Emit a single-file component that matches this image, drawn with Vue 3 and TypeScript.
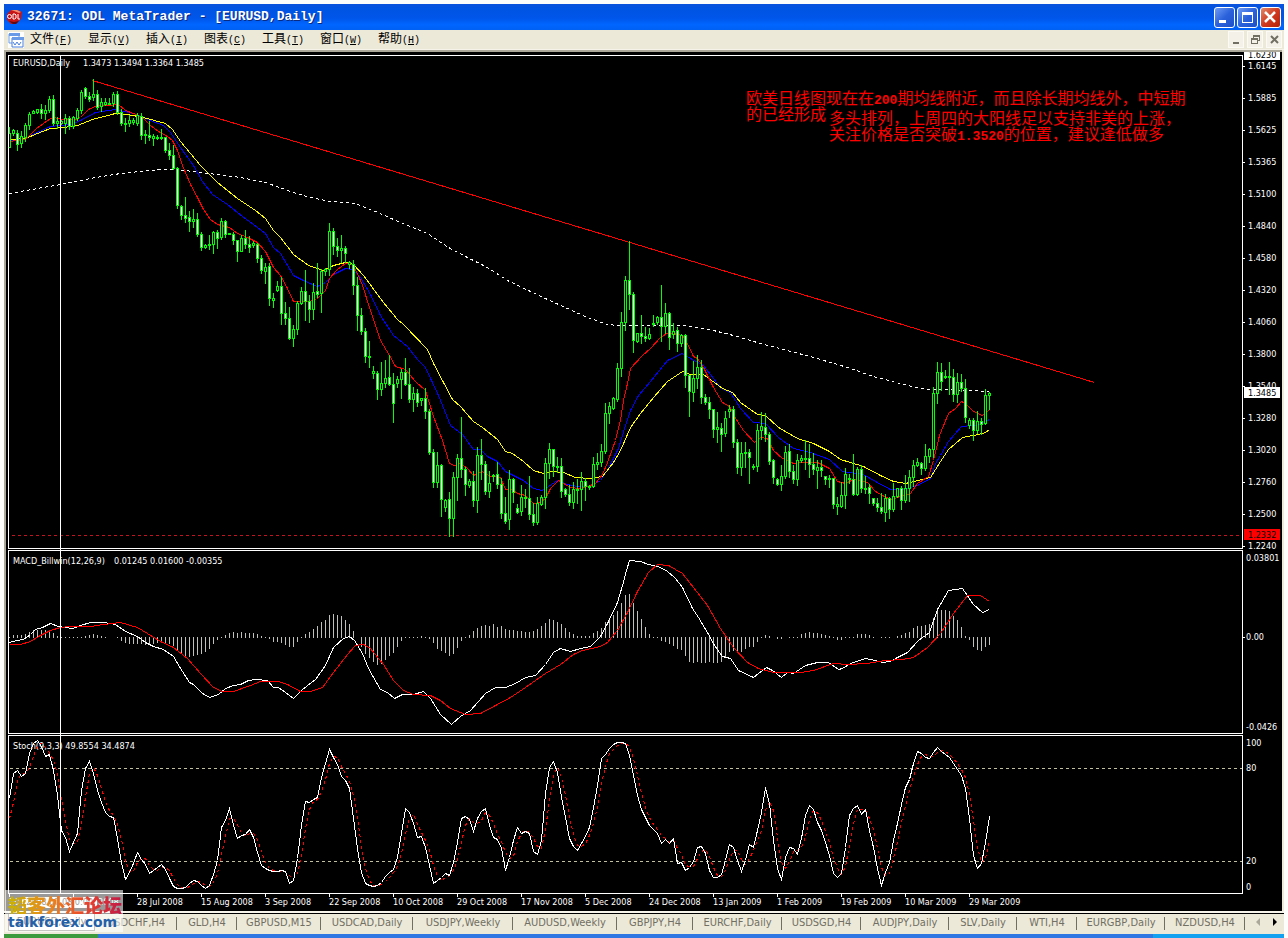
<script setup lang="ts">
interface Level { label: string; y: number }

const menus = [
  { name: '文件', key: 'F' }, { name: '显示', key: 'V' }, { name: '插入', key: 'I' }, { name: '图表', key: 'C' },
  { name: '工具', key: 'T' }, { name: '窗口', key: 'W' }, { name: '帮助', key: 'H' },
]
const tabs = [
  'EURUSD,Daily', 'USDCHF,H4', 'GLD,H4', 'GBPUSD,M15', 'USDCAD,Daily', 'USDJPY,Weekly', 'AUDUSD,Weekly', 'GBPJPY,H4',
  'EURCHF,Daily', 'USDSGD,H4', 'AUDJPY,Daily', 'SLV,Daily', 'WTI,H4', 'EURGBP,Daily', 'NZDUSD,H4',
]
const dates = [
  '20', '2008', '28 Jul 2008', '15 Aug 2008', '3 Sep 2008', '22 Sep 2008', '10 Oct 2008', '29 Oct 2008',
  '17 Nov 2008', '5 Dec 2008', '24 Dec 2008', '13 Jan 2009', '1 Feb 2009', '19 Feb 2009', '10 Mar 2009', '29 Mar 2009',
]
const priceLabels: Level[] = [
  '1.6145', '1.5885', '1.5625', '1.5365', '1.5100', '1.4840', '1.4580', '1.4320',
  '1.4060', '1.3800', '1.3540', '1.3280', '1.3020', '1.2760', '1.2500', '1.2240',
].map((label, i) => ({ label, y: 66 + i * 32 }))
const macdLabels: Level[] = [{ label: '0.03801', y: 558 }, { label: '0.00', y: 637 }, { label: '-0.0426', y: 727 }]
const stochLabels: Level[] = [{ label: '100', y: 743 }, { label: '80', y: 768 }, { label: '20', y: 861 }, { label: '0', y: 887 }]

const FIRST = 9
const STEP = 4

// One bar per entry: high, body top, body bottom, low, and d for a falling bar
const bars = `127 133 147 147,129 130 133 135,130 133 144 150 d,131 136 143 147,123 125 137 141,112 114 125 129,110 111 113 113,109 109 112 113,104 109 113 118 d,105 110 113 119,
96 99 110 112,95 99 123 125 d,117 121 123 128,120 121 123 124,114 118 123 133,116 118 126 129 d,116 117 126 128,108 110 118 120,90 92 110 113,87 88 96 98 d,
92 96 99 101 d,79 94 97 100,90 94 107 109 d,98 102 106 111,98 102 104 105,98 103 104 104,92 94 103 106,91 94 112 114 d,109 112 123 125 d,118 123 124 131,
115 120 123 126,118 120 122 124,113 115 123 125,113 116 135 139 d,130 134 135 143,121 135 137 140 d,134 136 138 145,135 137 138 139,129 137 138 139,137 137 150 152 d,
143 150 155 159 d,145 155 168 169 d,167 168 205 208 d,205 206 215 219 d,197 215 218 222 d,211 217 221 231 d,209 219 221 227,213 219 234 236 d,232 234 247 250 d,244 245 247 248,
235 244 245 249,231 232 244 253,230 232 238 248 d,218 221 237 239,220 221 234 237 d,233 233 234 234,232 234 240 244 d,240 240 251 261 d,235 238 251 251,230 238 244 248 d,
236 244 247 252 d,241 243 245 247,243 244 258 262 d,255 258 270 273 d,263 267 271 283,263 266 298 305 d,293 298 300 307,281 286 290 291,277 286 313 324 d,302 313 318 324 d,
307 318 338 339 d,325 329 338 346,301 303 329 334,287 291 303 304,270 291 301 320 d,295 301 309 322 d,283 292 309 319,263 291 294 297 d,269 271 293 312,268 269 271 275,
223 231 269 275,228 231 246 254 d,238 246 250 256 d,235 248 250 262,246 248 253 262 d,261 262 264 268,260 264 285 294 d,277 285 315 330 d,308 315 331 334 d,328 331 356 362 d,
341 356 357 367,366 371 373 378,371 373 389 399 d,362 383 389 395,360 378 383 387,355 377 384 385 d,373 384 403 422 d,376 379 383 387,369 372 379 398,358 372 384 385 d,
368 384 399 402 d,387 393 399 411,389 393 402 406 d,398 398 400 405,388 398 411 418 d,409 411 452 454 d,449 452 482 487 d,452 465 482 487,464 465 499 516 d,499 500 507 511,
492 499 518 536 d,472 477 518 536,454 458 477 500,417 458 469 477 d,467 469 484 495 d,479 481 485 487,471 481 500 506 d,447 455 500 512,439 455 464 479 d,461 464 491 494 d,
471 483 491 497,474 475 476 481,462 474 484 488 d,478 484 513 518 d,497 513 521 523 d,470 479 519 529,478 479 492 502 d,504 508 512 513 d,485 497 511 515,489 497 498 507,
476 498 514 519 d,503 514 522 525 d,497 503 522 524,495 497 504 505,458 463 497 508,443 449 463 478,449 449 466 476 d,457 466 467 472,458 466 491 497 d,488 489 494 496 d,
485 494 502 505 d,482 489 502 508,479 489 490 503,472 481 489 510,478 481 486 500 d,485 486 487 489,457 464 486 487,453 462 464 469,444 451 462 466,403 413 451 453,
402 406 413 423,397 398 408 409,363 368 399 401,312 322 368 376,276 280 322 330,241 280 294 309 d,292 294 340 352 d,333 333 341 342,315 333 336 343 d,327 336 338 341 d,
328 334 338 339,315 323 324 326,316 317 322 324,285 317 326 341 d,303 313 326 333,312 313 337 349 d,323 331 334 338,327 330 343 351 d,334 335 343 346,334 335 375 387 d,
375 375 391 416 d,361 378 392 401,355 367 378 388,360 367 397 403 d,394 397 402 404 d,397 402 409 418 d,409 409 429 437 d,412 427 429 442,423 428 434 451 d,411 418 433 436,
405 409 411 417,406 409 442 447 d,439 442 467 473 d,442 453 467 475,442 452 453 467,449 452 457 483 d,464 466 467 469,424 430 466 471,412 426 430 439,413 427 434 441 d,
432 434 461 464 d,459 460 477 483 d,478 479 484 485 d,465 476 484 490,446 452 476 478,444 451 471 477 d,465 471 479 483 d,454 460 479 485,455 458 460 462,440 458 459 469,
444 458 464 477 d,453 464 469 474 d,460 467 470 488,460 467 470 476 d,476 476 479 484 d,475 478 479 487,478 478 504 508 d,497 504 506 514,482 495 506 507,468 474 495 508,
474 478 479 483,454 479 494 495 d,467 469 494 495,465 469 488 492 d,476 488 489 493,484 487 493 503 d,498 498 503 505 d,498 503 507 511 d,493 507 511 513 d,494 498 512 521,
497 498 509 518 d,483 496 509 511,488 488 496 497,486 488 500 509 d,475 488 500 502,470 477 488 501,460 465 477 486,458 462 465 466,462 463 468 474 d,444 456 468 470,
448 449 456 462,387 393 449 457,362 372 393 403,363 372 381 390 d,370 376 377 378,362 376 377 394,369 377 394 401 d,373 382 394 402,374 382 388 391 d,379 388 417 422 d,
418 420 425 428,418 420 430 440 d,411 421 430 433,418 421 424 434 d,389 395 423 424,392 393 395 409`

const candles = bars.split(',').map((row, i) => {
  const [high, top, bottom, low, down] = row.trim().split(' ')
  return { x: FIRST + i * STEP, high: +high, top: +top, bottom: +bottom, low: +low, down: down === 'd' }
})
const box = (x: number, y: number, w: number, h: number) => `M${x} ${y}h${w}v${h}h${-w}z`
const green = candles
  .map(c => box(c.x, c.high, 1, c.low - c.high + 1) + box(c.x - 1, c.top, 3, c.bottom - c.top + 1))
  .join('')
const core = (down: boolean) => candles
  .filter(c => c.down === down && c.bottom - c.top > 1)
  .map(c => box(c.x, c.top + 1, 1, c.bottom - c.top - 1))
  .join('')

const fastMa = '9,141 25,139 36,128 43,123 50,118 53,117 63,119 75,119 80,117 88,109 97,105 107,105 118,104 125,110 133,113 142,117 150,125 158,131 167,136 172,140 177,150 182,165 190,184 197,197 203,209 210,219 217,224 229,227 237,233 247,237 257,242 265,251 273,267 280,275 287,288 293,301 300,301 309,301 316,299 325,290 329,278 337,269 345,263 352,264 357,273 362,285 370,310 380,340 389,355 395,366 405,369 415,381 425,390 433,416 442,440 449,463 454,465 460,463 467,468 473,475 482,471 490,476 500,477 505,489 512,489 517,493 525,495 533,503 540,502 545,498 550,488 558,480 570,487 578,488 587,486 595,483 602,474 607,462 615,440 620,420 623,400 627,383 630,368 642,355 650,348 660,337 668,332 682,335 688,345 693,356 697,358 703,367 713,387 722,402 729,406 737,421 743,430 754,442 760,437 767,438 773,450 782,458 787,460 793,463 802,462 817,462 829,468 837,481 845,483 853,479 867,482 875,491 882,495 890,499 897,497 910,493 917,483 928,476 933,460 939,435 948,413 955,408 961,401 965,403 973,411 982,415 989,409'
const middleMa = '9,140 25,138 37,132 50,126 70,124 80,120 95,112 115,109 133,113 150,120 163,125 170,132 180,147 193,165 202,181 212,194 227,204 242,216 253,224 265,233 273,247 280,253 293,275 305,281 317,286 325,282 333,274 345,268 352,269 360,277 370,294 380,315 393,335 407,346 417,359 425,367 438,395 450,425 462,434 473,449 480,449 487,456 497,461 505,471 513,475 523,480 533,488 542,490 548,486 557,480 567,484 577,486 590,486 600,480 608,468 618,448 625,425 630,410 638,395 650,381 667,360 682,353 690,358 703,365 720,387 730,392 740,408 753,422 765,423 778,437 793,448 810,452 829,459 842,471 863,474 875,481 890,489 903,489 917,485 930,478 935,463 940,455 948,441 961,426 973,425 982,423 989,419'
const slowMa = '9,139 25,138 37,133 50,128 63,127 77,125 92,119 115,113 127,114 143,117 165,123 172,129 180,141 200,165 217,182 237,198 255,210 265,218 273,230 280,237 293,254 308,265 323,270 333,265 345,262 353,264 363,275 383,302 397,319 403,324 427,349 433,363 452,399 460,406 473,421 482,427 497,439 505,451 512,453 523,461 533,470 543,473 552,471 563,472 575,477 590,478 602,476 613,462 620,450 630,427 640,413 653,397 667,381 682,371 690,374 703,374 722,388 732,392 740,402 757,414 765,415 778,427 797,438 813,443 829,451 840,459 863,466 880,475 893,481 905,483 930,477 940,461 948,449 955,443 962,437 967,436 978,434 985,432 989,429'
const longMa = '9,193 37,188 60,184 90,178 120,173 160,169 177,169 200,172 240,177 265,182 293,192 310,197 330,201 355,203 375,211 400,222 415,228 427,233 448,247 467,257 487,267 507,280 530,291 547,299 567,308 587,317 607,324 618,325 682,325 697,327 713,330 733,335 760,343 787,350 813,357 847,367 873,376 907,385 927,389 940,389 967,390 989,391'

const macdLine = '9,642 16,640 23,639 30,634 35,629 42,627 50,623 58,626 72,628 80,625 90,622 103,622 115,624 125,631 137,636 145,642 153,646 163,649 173,656 182,671 189,682 193,684 202,693 209,697 218,694 225,688 233,685 240,684 248,680 255,679 267,680 273,687 278,687 285,692 293,698 302,689 315,679 325,665 333,647 343,638 349,636 354,640 362,653 368,668 380,689 387,692 394,698 402,694 413,694 423,691 430,698 440,714 451,724 460,716 470,710 485,693 495,687 505,687 515,683 525,677 535,675 545,664 553,652 560,648 570,651 580,648 590,646 600,636 607,623 617,602 622,585 626,570 629,560 640,561 648,564 657,566 666,570 675,578 682,587 692,608 698,617 707,632 714,645 722,656 730,658 738,670 753,677 758,673 766,667 772,670 781,677 787,672 793,673 805,665 817,662 828,662 838,669 842,668 850,663 865,658 875,660 882,662 890,661 897,657 907,652 918,640 929,632 937,609 948,590 962,588 973,604 982,612 989,609'
const signalLine = '9,644 20,644 30,641 40,635 50,630 60,627 70,626 90,626 103,624 120,622 137,627 147,633 160,641 173,647 187,658 200,673 213,687 222,691 233,691 250,685 260,681 278,681 287,684 300,691 310,691 322,687 333,672 347,654 355,645 363,644 370,648 383,664 393,680 403,690 413,694 430,695 440,700 450,708 465,714 480,713 495,705 510,697 525,687 545,673 560,664 573,654 582,650 600,646 607,642 617,630 627,612 637,591 648,572 657,564 668,565 682,573 693,587 707,605 720,628 733,647 747,662 758,668 773,672 800,672 813,670 833,663 847,664 867,663 885,660 902,659 913,657 927,647 940,633 953,613 967,595 980,595 989,601'
const histogram = [
  1, 3, 3, 3, 4, 6, 8, 8, 8, 8, 8, 5, 2, 1, 1, -1, -1, 1, 1, 2, 3, 4, 3, 2, 1, 0, 0, -1, -4, -6, -7, -7, -7, -7, -8, -8, -7, -6, -5, -6,
  -7, -9, -14, -17, -19, -20, -19, -18, -17, -15, -12, -7, -3, 1, 3, 5, 6, 5, 6, 5, 5, 5, 4, 2, 1, -2, -5, -5, -6, -8,
  -10, -10, -5, 1, 4, 6, 9, 12, 16, 18, 23, 24, 23, 22, 18, 14, 7, 0, -10, -17, -21, -25, -28, -27, -23, -19, -16, -10, -4, -1,
  1, -1, 1, 2, 1, -2, -6, -12, -14, -16, -19, -17, -11, -4, -1, 3, 7, 10, 12, 13, 12, 14, 11, 12, 9, 8, 8, 7, 7, 6,
  6, 7, 9, 12, 15, 19, 18, 16, 14, 10, 6, 4, 2, 2, 2, 2, 5, 7, 10, 16, 20, 23, 27, 35, 43, 44, 35, 27, 19, 11,
  4, 1, -1, -4, -5, -7, -9, -12, -13, -19, -25, -26, -25, -26, -26, -25, -26, -26, -25, -21, -15, -14, -16, -15, -12, -10, -10, -5, -1, 3,
  2, 0, -2, -2, 0, 1, 1, 1, 4, 5, 6, 5, 5, 4, 3, 2, 1, -3, -3, -1, 1, 1, 4, 4, 4, 3, 1, 0, -1, -1,
  -1, 0, 2, 3, 5, 6, 10, 12, 12, 13, 14, 20, 28, 28, 28, 27, 22, 18, 11, 2, -3, -10, -13, -14, -10, -8,
]
const histogramPath = histogram
  .map((v, i) => (v === 0 ? '' : box(FIRST + i * STEP, v > 0 ? 638 - v : 637, 1, Math.abs(v))))
  .join('')

const stoch = [
  798, 773, 770, 776, 773, 753, 743, 740, 746, 756, 754, 770, 795, 830, 837, 851, 842, 833, 790, 768, 761, 773, 790, 802, 812, 816, 817, 838, 862, 879,
  872, 863, 852, 859, 864, 873, 870, 867, 864, 869, 878, 886, 888, 888, 887, 883, 880, 881, 885, 888, 885, 874, 860, 827, 820, 808, 825, 838, 835, 834,
  829, 837, 852, 865, 868, 870, 871, 871, 870, 871, 883, 880, 858, 825, 801, 802, 799, 797, 777, 763, 749, 757, 764, 776, 780, 788, 818, 848, 872, 883,
  885, 886, 885, 882, 876, 872, 869, 857, 833, 808, 812, 823, 837, 836, 847, 865, 883, 880, 877, 873, 875, 862, 842, 818, 816, 819, 831, 818, 811, 808,
  825, 837, 839, 848, 870, 857, 840, 827, 833, 831, 833, 851, 854, 840, 793, 767, 761, 772, 797, 817, 838, 846, 850, 843, 836, 827, 807, 785, 758, 754,
  748, 744, 742, 742, 743, 755, 775, 795, 809, 817, 825, 829, 833, 843, 839, 843, 838, 863, 862, 870, 867, 861, 847, 846, 853, 870, 877, 877, 874, 860,
  844, 847, 860, 871, 860, 844, 847, 830, 812, 787, 803, 840, 868, 879, 857, 847, 848, 854, 838, 815, 805, 809, 822, 830, 842, 855, 873, 877,
  873, 847, 815, 808, 805, 814, 809, 830, 847, 868, 885, 872, 862, 840, 823, 804, 787, 779, 763, 751, 753, 757, 758, 752, 747, 751, 754, 757, 763, 769,
  775, 788, 818, 855, 868, 863, 842, 816,
]
const toPoints = (values: number[]) => values.map((y, i) => `${FIRST + i * STEP},${y}`).join(' ')
const kLine = toPoints(stoch)
const dLine = toPoints(stoch.map((y, i) => Math.round((y + (stoch[i - 1] ?? 820) + (stoch[i - 2] ?? 836)) / 3)))
</script>

<template>
  <div class="window">
    <header class="title-bar">
      <svg class="app-icon" width="16" height="16" viewBox="0 0 16 16" aria-hidden="true">
        <path d="M1 5 5 1h7l4 2-1 7-5 5H5L1 11z" fill="#c81414" />
        <path d="M5 1h6l4 2-2 1-5-2z" fill="#ef8a6c" />
        <path d="M3 12l4 3h3l3-3-5 1z" fill="#5c0b16" />
        <g fill="none" stroke="#fff"><circle cx="3.500" cy="7.500" r="2" /><path d="M7 5v5h1.500l1.500-1v-3l-1-1zM12 5v5h2" /></g>
      </svg>
      <h1>32671: ODL MetaTrader - [EURUSD,Daily]</h1>
      <div class="window-buttons">
        <button type="button" aria-label="Minimize"><svg width="18" height="18"><path d="M4 12h7v3H4z" fill="#fff" /></svg></button>
        <button type="button" aria-label="Maximize"><svg width="18" height="18"><path d="M4 4h11v11H4zM5 7v7h9V7z" fill="#fff" fill-rule="evenodd" /></svg></button>
        <button type="button" class="close" aria-label="Close"><svg width="18" height="18"><path d="m4 4 10 10M14 4 4 14" stroke="#fff" stroke-width="2.500" /></svg></button>
      </div>
    </header>

    <nav class="menu-bar" aria-label="Menu">
      <svg class="doc-icon" width="16" height="16" viewBox="0 0 16 16" aria-hidden="true">
        <rect width="16" height="16" fill="#fff" />
        <path d="M1 2h10v9H1z" fill="#fff" stroke="#6a9be6" /><path d="M1 1h11v3H1z" fill="#6a9be6" />
        <path d="M4 6h11v9H4z" fill="#fff" stroke="#4a80dc" /><path d="M4 5h12v3H4z" fill="#6a9be6" />
        <path d="m5 10 2 3 2-3 2 3 2-3" fill="none" stroke="#4a80dc" />
      </svg>
      <button v-for="m in menus" :key="m.key" type="button" class="menu">{{ m.name }}<span>(<u>{{ m.key }}</u>)</span></button>
      <div class="child-buttons">
        <button type="button" aria-label="Minimize chart"><svg width="15" height="15"><path d="M4 10h6v2H4z" fill="#716f64" /></svg></button>
        <button type="button" aria-label="Restore chart"><svg width="15" height="15"><path d="M5 3h7v6h-2V8h1V5H6v1H5zM3 6h7v6H3zM4 8v3h5V8z" fill="#716f64" fill-rule="evenodd" /></svg></button>
        <button type="button" aria-label="Close chart"><svg width="15" height="15"><path d="m4 4 7 7M11 4l-7 7" stroke="#716f64" stroke-width="2" /></svg></button>
      </div>
    </nav>

    <main class="chart-frame">
      <section class="pane price">
        <svg class="plot" role="img" aria-label="EURUSD daily candles">
          <g transform="translate(-9 -56)"><text x="13" y="66">EURUSD,Daily</text><text x="83" y="66">1.3473 1.3494 1.3364 1.3485</text></g>
          <g transform="translate(-8.500 -55.500)" fill="none">
            <polyline :points="longMa" stroke="#fff" stroke-dasharray="3 3" />
            <polyline :points="middleMa" stroke="#00f" />
            <polyline :points="slowMa" stroke="#ff0" />
            <polyline :points="fastMa" stroke="#f00" />
            <path d="M92 80 1094 382" stroke="#f00" />
          </g>
          <g transform="translate(-9 -56)">
            <path :d="green" fill="#0f0" />
            <path :d="core(false)" fill="#000" />
            <path :d="core(true)" fill="#fff" />
          </g>
          <line x1="3" y1="479.500" x2="100%" y2="479.500" stroke="#c01420" stroke-dasharray="3 3" />
          <g class="note" transform="translate(-9 -56)">
            <text x="746" y="104">欧美日线图现在在<tspan class="num">200</tspan>期均线附近，而且除长期均线外，中短期</text>
            <text x="746" y="120">的已经形成</text>
            <text x="829" y="124">多头排列，上周四的大阳线足以支持非美的上涨，</text>
            <text x="829" y="140">关注价格是否突破<tspan class="num">1.3520</tspan>的位置，建议逢低做多</text>
          </g>
        </svg>
        <svg class="scale">
          <g transform="translate(-1243 -55)">
            <g v-for="l in priceLabels" :key="l.label"><path :d="`M1243 ${l.y}h2v1h-2z`" fill="#fff" /><text x="1248" :y="l.y + 3">{{ l.label }}</text></g>
            <path d="M1244 51h36v9h-36zM1244 387h36v11h-36z" fill="#fff" /><path d="M1244 529h36v11h-36z" fill="#f00" />
            <text class="ink" x="1248" y="58">1.6230</text><text class="ink" x="1248" y="396">1.3485</text><text class="ink" x="1248" y="538">1.2332</text>
          </g>
        </svg>
      </section>

      <section class="pane macd">
        <svg class="plot" role="img" aria-label="MACD">
          <g transform="translate(-9 -551)"><text x="13" y="564">MACD_Billwin(12,26,9)</text><text x="114" y="564">0.01245 0.01600 -0.00355</text><path :d="histogramPath" fill="#c0c0b8" /></g>
          <g transform="translate(-8.500 -550.500)" fill="none">
            <polyline :points="macdLine" stroke="#fff" /><polyline :points="signalLine" stroke="#f00" />
          </g>
        </svg>
        <svg class="scale"><g transform="translate(-1243 -550)"><text v-for="l in macdLabels" :key="l.label" x="1246" :y="l.y + 3">{{ l.label }}</text><path d="M1243 637h2v1h-2z" fill="#fff" /></g></svg>
      </section>

      <section class="pane stoch">
        <svg class="plot" role="img" aria-label="Stochastic oscillator">
          <g transform="translate(-9 -736)"><text x="13" y="749">Stoch(9,3,3) 49.8554 34.4874</text></g>
          <path class="level" d="M1 32.500h4000M1 125.500h4000" />
          <g transform="translate(-8.500 -735.500)" fill="none">
            <polyline :points="dLine" stroke="#f00" stroke-dasharray="3 3" /><polyline :points="kLine" stroke="#fff" />
          </g>
        </svg>
        <svg class="scale"><g transform="translate(-1243 -735)"><text v-for="l in stochLabels" :key="l.label" x="1246" :y="l.y + 3">{{ l.label }}</text></g></svg>
      </section>

      <ol class="dates"><li v-for="d in dates" :key="d">{{ d }}</li></ol>
      <span class="cursor-date">2008.07.08 0:00</span>
      <i class="cursor-line"></i>
    </main>

    <footer class="tab-bar">
      <button v-for="(t, i) in tabs" :key="t" type="button" :class="{ active: i === 0 }">{{ t }}</button>
      <span class="spacer"></span>
      <button type="button" class="arrow" aria-label="Scroll left"><svg width="5" height="8"><path d="M4 0v8L0 4z" fill="#aca899" /></svg></button>
      <button type="button" class="arrow" aria-label="Scroll right"><svg width="5" height="8"><path d="M0 0v8l4-4z" fill="#000" /></svg></button>
      <div class="watermark"><b>韬客外汇论坛</b><strong>talkforex.com</strong></div>
    </footer>
    <div class="task-bar"><i></i><i></i></div>
  </div>
</template>

<style>
body { background: #fdfdfb; }
</style>

<style scoped>
* { box-sizing: border-box; margin: 0; }
button { border: 0; padding: 0; background: none; color: inherit; font: inherit; }
.window { padding: 4px 4px 0; overflow: hidden; font: 11px/14px "DejaVu Sans Condensed", "Noto Sans CJK SC", sans-serif; }
.title-bar { display: flex; align-items: center; height: 26px; padding: 0 3px 0 2px; background: linear-gradient(#0a52dc, #0054e3 20%, #0056ea 55%, #0066ff 80%, #0060f4); }
.app-icon { margin-right: 5px; }
h1 { flex: 1; color: #fff; font: bold 13px/24px "Liberation Mono", monospace; text-shadow: 1px 1px #0a2a80; white-space: nowrap; }
.window-buttons { display: flex; gap: 2px; }
.window-buttons button { width: 21px; height: 21px; border: 1px solid #fff; border-radius: 3px; background: linear-gradient(135deg, #6f9cf4, #2b62dc 50%, #1c50c8); }
.window-buttons button.close { background: linear-gradient(135deg, #e08a6c, #d03a20 50%, #b42008); }
.window-buttons svg { display: block; }

.menu-bar { display: flex; align-items: center; height: 20px; padding: 0 2px 0 4px; background: #ece9d8; border-bottom: 1px solid #f6f4ea; color: #000; }
.doc-icon { margin-right: 6px; }
.menu { width: 58px; font-size: 12px; line-height: 18px; text-align: left; white-space: nowrap; }
.menu span { font: 10px/18px "Liberation Mono", monospace; }
.child-buttons { display: flex; gap: 3px; margin-left: auto; }
.child-buttons button { width: 16px; height: 17px; background: #f4f2e8; border: 1px solid #fbfaf5; }
.child-buttons svg { display: block; }

.chart-frame { position: relative; overflow: hidden; padding: 3px 0 0 2px; margin-right: 2px; background: #000; border: 2px solid #aca899; border-width: 2px 0 0 2px; border-bottom-color: #716f64; }
.chart-frame { box-shadow: 2px 0 #ece9d8; }
.pane { display: grid; grid-template-columns: minmax(0, 1fr) 39px; margin-bottom: 1px; }
.plot { display: block; width: 100%; height: 100%; border: 1px solid #fff; }
.scale { display: block; width: 39px; height: 100%; overflow: visible; }
.price { height: 494px; }
.macd { height: 184px; }
.stoch { height: 159px; margin-bottom: 0; }
.pane svg { shape-rendering: crispEdges; }
.pane text { fill: #fff; font: 9px "DejaVu Sans Condensed", sans-serif; }
.pane .ink { fill: #000; }
.pane .note text { fill: #f00; font: 16px "Noto Sans CJK SC", sans-serif; }
.pane .note .num { font: bold 13px "Liberation Mono", monospace; }
.level { stroke: #c0c0a0; stroke-dasharray: 3 3; }
.dates { display: flex; height: 17px; padding: 0 0 0 1px; list-style: none; color: #fff; font-size: 9px; line-height: 17px; }
.dates li { flex: 0 0 64px; width: 64px; white-space: nowrap; background: linear-gradient(#fff, #fff) 0 0 / 1px 3px no-repeat; }
.dates li:nth-child(2) { padding-left: 25px; }
.cursor-date { position: absolute; left: 16px; bottom: 3px; width: 75px; height: 11px; background: #fff; color: #000; font-size: 9px; line-height: 11px; text-align: center; }
.cursor-line { position: absolute; left: 54px; top: 4px; bottom: 17px; width: 1px; background: #fff; }

.tab-bar { position: relative; display: grid; grid-template-columns: 91px 82px 60px 84px 92px 100px 104px 76px 89px 79px 88px 68px 60px 88px 80px 1fr 16px 18px; height: 23px; padding: 1px 0 3px; background: #ece9d8; border-top: 2px solid #f6f4ea; box-shadow: inset 0 1px #000; color: #716f64; white-space: nowrap; }
.tab-bar > button { position: relative; line-height: 16px; }
.tab-bar > button::after { content: ""; position: absolute; right: 0; top: 3px; height: 13px; border-right: 1px solid #716f64; }
.tab-bar > .active { margin-left: 4px; background: #fff; border: 1px solid #716f64; border-top: 0; color: #000; }
.tab-bar > .active::after, .tab-bar > .arrow::after { display: none; }
.watermark { position: absolute; left: 1px; bottom: 2px; display: flex; flex-direction: column; width: 118px; height: 42px; padding: 5px 0 0 3px; background: rgba(255, 255, 255, 0.6); }
.watermark b { font: 900 19px/19px "Noto Sans CJK SC", sans-serif; background: linear-gradient(90deg, #c8b400, #e88a20 35%, #e8402c 70%, #c01848); background-clip: text; color: transparent; }
.watermark strong { color: #2460a8; font: bold 14px/16px "DejaVu Sans", sans-serif; }
.task-bar { display: flex; height: 4px; background: #2f78e4; }
.task-bar i:first-child { width: 94px; background: #3c9a3c; }
.task-bar i:last-child { width: 131px; margin-left: auto; background: #12a0f0; }
</style>
